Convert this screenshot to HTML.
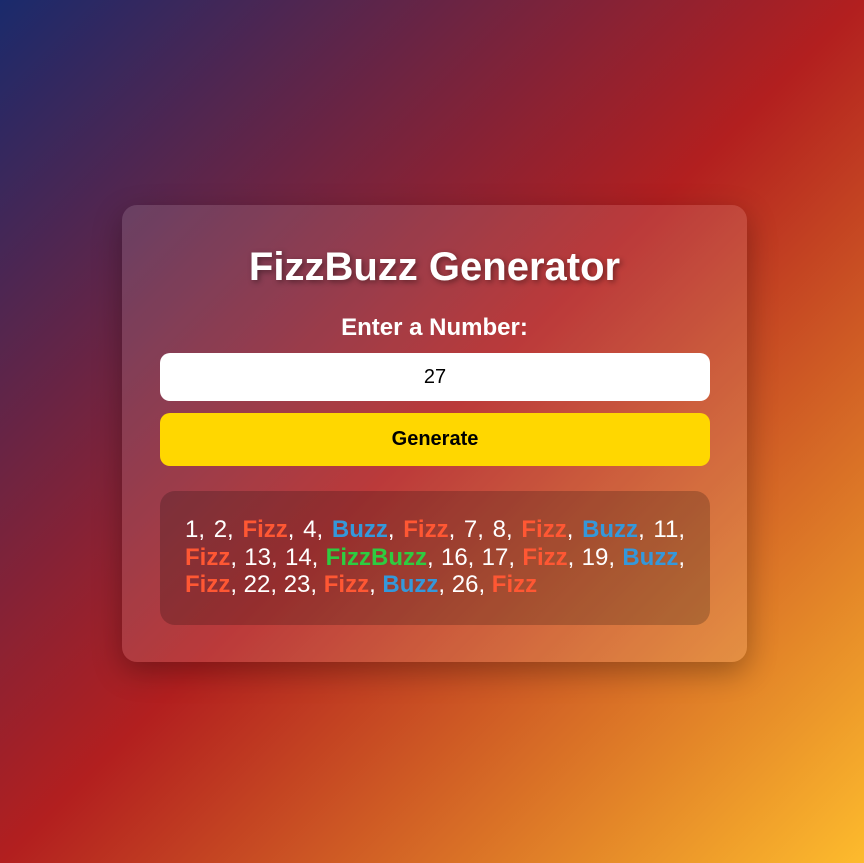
<!DOCTYPE html>
<html><head><meta charset="utf-8"><style>
html,body{margin:0;padding:0;width:864px;height:863px;overflow:hidden}
body{background:linear-gradient(135deg,#1a2a6c 0%,#b21f1f 50%,#fdbb2d 100%);font-family:"Liberation Sans",Arial,sans-serif;position:relative}
.card{position:absolute;left:122px;top:205px;width:625px;height:457px;box-sizing:border-box;padding:0 37px;background:rgba(255,255,255,0.12);border-radius:15px;box-shadow:0 10px 30px rgba(0,0,0,0.3)}
.title{position:absolute;left:0;right:0;top:40px;text-align:center;color:#fff;font-size:40px;font-weight:bold;text-shadow:2px 2px 6px rgba(0,0,0,0.4)}
.label{position:absolute;left:0;right:0;top:109px;text-align:center;color:#fff;font-size:24px;font-weight:bold}
.input{position:absolute;left:38px;width:550px;top:148px;height:48px;background:#fff;border-radius:10px;text-align:center;line-height:48px;font-size:20px;color:#000}
.btn{position:absolute;left:38px;width:550px;top:208px;height:53px;background:#ffd700;border-radius:10px;text-align:center;line-height:53px;font-size:20px;font-weight:bold;color:#000}
.res{position:absolute;left:38px;width:550px;top:286px;height:134px;box-sizing:border-box;padding:25px 25px;background:rgba(0,0,0,0.2);border-radius:15px;color:#fff;font-size:24px;line-height:27.5px;white-space:nowrap}
.j{text-align:justify;text-align-last:justify;white-space:normal}
.f{color:#ff5733;font-weight:bold}.b{color:#3498db;font-weight:bold}.fb{color:#2ecc40;font-weight:bold}
</style></head><body>
<div class="card">
<div class="title">FizzBuzz Generator</div>
<div class="label">Enter a Number:</div>
<div class="input">27</div>
<div class="btn">Generate</div>
<div class="res"><div class="j">1, 2, <span class="f">Fizz</span>, 4, <span class="b">Buzz</span>, <span class="f">Fizz</span>, 7, 8, <span class="f">Fizz</span>, <span class="b">Buzz</span>, 11,</div><div class="j"><span class="f">Fizz</span>, 13, 14, <span class="fb">FizzBuzz</span>, 16, 17, <span class="f">Fizz</span>, 19, <span class="b">Buzz</span>,</div><div><span class="f">Fizz</span>, 22, 23, <span class="f">Fizz</span>, <span class="b">Buzz</span>, 26, <span class="f">Fizz</span></div></div>
</div>
</body></html>
